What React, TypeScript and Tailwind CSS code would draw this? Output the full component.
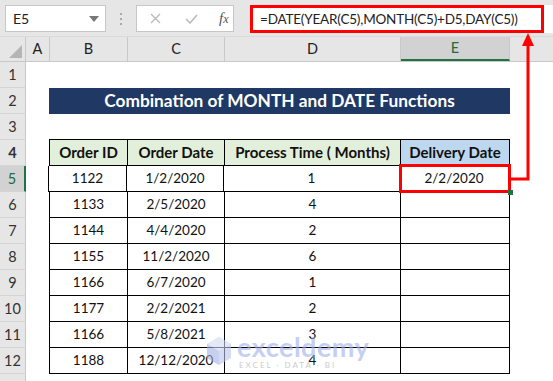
import React from "react";

const FONT = { fontFamily: "Lato, 'Open Sans', sans-serif" };

const ROWS = [
  { id: "1122", date: "1/2/2020", months: "1", delivery: "2/2/2020" },
  { id: "1133", date: "2/5/2020", months: "4", delivery: "" },
  { id: "1144", date: "4/4/2020", months: "2", delivery: "" },
  { id: "1155", date: "11/2/2020", months: "6", delivery: "" },
  { id: "1166", date: "6/7/2020", months: "1", delivery: "" },
  { id: "1177", date: "2/2/2021", months: "2", delivery: "" },
  { id: "1166", date: "5/8/2021", months: "3", delivery: "" },
  { id: "1188", date: "12/12/2020", months: "4", delivery: "" },
];

function RowHead({ n, selected }: { n?: number; selected?: boolean }) {
  return (
    <div
      className={`w-[26px] h-full shrink-0 flex items-center justify-center text-[14.5px] border-b border-[#d4d4d4] ${
        selected ? "bg-[#d2d2d2] text-[#1e6b40] border-r-2 border-r-[#217346]" : "bg-[#e6e6e6] text-[#333] border-r border-r-[#c8c8c8]"
      }`}
    >
      {n}
    </div>
  );
}

function ColHead({ label, w, selected }: { label: string; w: string; selected?: boolean }) {
  return (
    <div
      className={`${w} h-full shrink-0 flex items-center justify-center text-[14.5px] border-r border-[#c8c8c8] ${
        selected ? "bg-[#d2d2d2] text-[#1e6b40] border-b-2 border-b-[#217346]" : "text-[#222]"
      }`}
    >
      {label}
    </div>
  );
}

export default function App() {
  return (
    <div className="relative w-[553px] h-[381px] overflow-hidden bg-white" style={FONT}>
      {/* formula bar */}
      <div className="h-[37px] bg-[#e6e6e6] flex items-start pt-[5px] pl-[5px] border-b border-[#dadada]">
        <div className="w-[101px] h-[27px] bg-white border border-[#c6c6c6] flex items-center pl-[7px] pr-[6px] text-[14px] text-[#222]">
          <span className="flex-1">E5</span>
          <svg width="10" height="6" viewBox="0 0 10 6"><path d="M0 0h10L5 6z" fill="#777" /></svg>
        </div>
        <div className="w-[30px] h-[27px] flex flex-col items-center justify-center gap-[3px]">
          <span className="w-[2px] h-[2px] bg-[#aaa]" />
          <span className="w-[2px] h-[2px] bg-[#aaa]" />
          <span className="w-[2px] h-[2px] bg-[#aaa]" />
        </div>
        <div className="w-[98px] h-[27px] bg-white border border-[#c6c6c6] flex items-center">
          <svg className="ml-[13px]" width="11" height="11" viewBox="0 0 11 11">
            <path d="M1 1l9 9M10 1l-9 9" stroke="#bbb" strokeWidth="1.4" />
          </svg>
          <svg className="ml-[24px]" width="13" height="10" viewBox="0 0 13 10">
            <path d="M1 5l4 4 7-8" stroke="#bbb" strokeWidth="1.6" fill="none" />
          </svg>
          <span className="ml-[21px] text-[15px] italic text-[#555]" style={{ fontFamily: "'Liberation Serif', serif" }}>
            f<span className="text-[12px]">x</span>
          </span>
        </div>
        <div className="ml-[16px] flex-1 h-[28px] bg-white">
          <div className="w-[294px] h-[28px] border-[3px] border-[#ff0000] flex items-center pl-[7px] text-[13.5px] tracking-[-0.2px] text-[#222] whitespace-nowrap">
            =DATE(YEAR(C5),MONTH(C5)+D5,DAY(C5))
          </div>
        </div>
      </div>

      {/* column headers */}
      <div className="h-[25px] flex bg-[#e6e6e6] border-b border-[#c8c8c8]">
        <div className="w-[26px] h-full shrink-0 border-r border-[#c8c8c8] flex items-end justify-end p-[3px]">
          <svg width="13" height="13" viewBox="0 0 13 13"><path d="M13 0v13H0z" fill="#b5b5b5" /></svg>
        </div>
        <ColHead label="A" w="w-[24px]" />
        <ColHead label="B" w="w-[78px]" />
        <ColHead label="C" w="w-[97px]" />
        <ColHead label="D" w="w-[176px]" />
        <ColHead label="E" w="w-[109px]" selected />
        <div className="flex-1" />
      </div>

      {/* row 1 */}
      <div className="h-[26px] flex">
        <RowHead n={1} />
      </div>

      {/* row 2 - title */}
      <div className="h-[26px] flex">
        <RowHead n={2} />
        <div className="w-[23px] shrink-0" />
        <div className="w-[461px] h-[26px] bg-[#203864] text-white font-bold text-[17.3px] flex items-center justify-center">
          Combination of MONTH and DATE Functions
        </div>
      </div>

      {/* row 3 */}
      <div className="h-[26px] flex">
        <RowHead n={3} />
        <div className="w-[23px] shrink-0" />
        <div className="w-[461px] h-full border-b border-black" />
      </div>

      {/* row 4 - headers */}
      <div className="h-[26px] flex text-[15px] font-bold text-[#111]">
        <RowHead n={4} />
        <div className="w-[23px] shrink-0" />
        <div className="w-[79px] shrink-0 bg-[#e2efda] border-l border-r border-b border-black flex items-center justify-center">Order ID</div>
        <div className="w-[97px] shrink-0 bg-[#e2efda] border-r border-b border-black flex items-center justify-center">Order Date</div>
        <div className="w-[176px] shrink-0 bg-[#e2efda] border-r border-b border-black flex items-center justify-center">Process Time ( Months)</div>
        <div className="w-[109px] shrink-0 bg-[#bdd7ee] border-r border-b border-black flex items-center justify-center">Delivery Date</div>
      </div>

      {ROWS.map((r, i) => (
        <div key={i} className="h-[26px] flex text-[13.5px] text-[#111]">
          <RowHead n={i + 5} selected={i === 0} />
          <div className={`${i === 0 ? "w-[22px]" : "w-[23px]"} shrink-0`} />
          <div className="w-[79px] shrink-0 border-l border-r border-b border-black flex items-center justify-center">{r.id}</div>
          <div className="w-[97px] shrink-0 border-r border-b border-black flex items-center justify-center">{r.date}</div>
          <div className="w-[176px] shrink-0 border-r border-b border-black flex items-center justify-center">{r.months}</div>
          <div className="w-[109px] shrink-0 border-r border-b border-black flex items-center justify-center">{r.delivery}</div>
        </div>
      ))}

      <div className="h-[26px] flex">
        <RowHead />
      </div>

      {/* selection highlight on E5 */}
      <div className="absolute left-[399px] top-[164px] w-[112px] h-[29px] border-[3px] border-[#ff0000]" />
      <div className="absolute left-[508px] top-[190px] w-[5px] h-[5px] bg-[#217346]" />

      {/* arrow from E5 to formula bar */}
      <svg className="absolute left-0 top-0 pointer-events-none" width="553" height="381">
        <polyline points="511,179 528,179 528,44" fill="none" stroke="#ff0000" strokeWidth="3" />
        <polygon points="528,33 522,46 534,46" fill="#ff0000" />
      </svg>

      {/* watermark */}
      <div className="absolute left-[205px] top-[333px] flex items-center gap-[4px] opacity-60 pointer-events-none">
        <svg width="28" height="30" viewBox="0 0 28 30">
          <path d="M14 1l12 7v14l-12 7-12-7V8z" fill="#b8c4ec" />
          <path d="M14 1l12 7-12 7-12-7z" fill="#d3dbf5" />
          <path d="M14 15v14l-12-7V8z" fill="#a3b2e6" />
        </svg>
        <div className="flex flex-col leading-none">
          <span className="text-[27px] font-bold text-[#9fb0ee] tracking-[0.5px]">exceldemy</span>
          <span className="text-[8px] text-[#aaa] tracking-[2px] mt-[1px] ml-[2px]">EXCEL · DATA · BI</span>
        </div>
      </div>
    </div>
  );
}
